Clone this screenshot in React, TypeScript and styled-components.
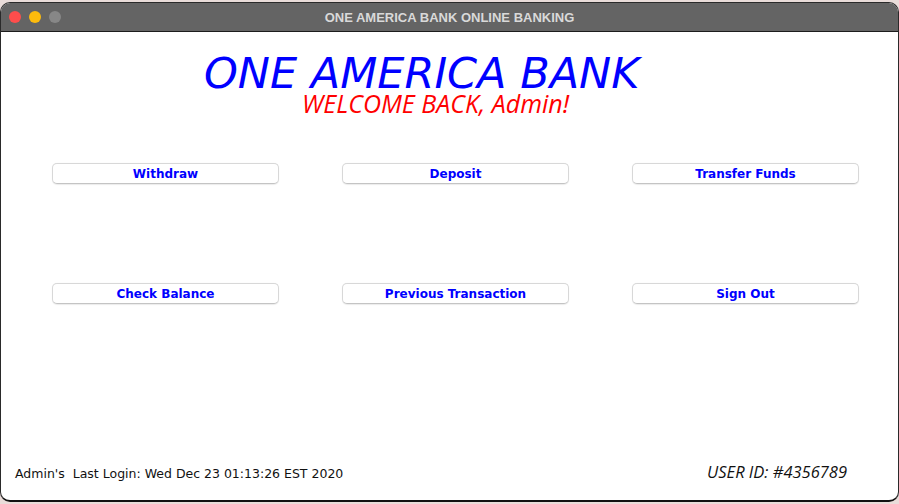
import React from "react";
import styled, { createGlobalStyle } from "styled-components";

const Global = createGlobalStyle`
  html, body { margin: 0; padding: 0; background: #e9dcd9; }
  body { width: 899px; height: 504px; overflow: hidden; }
`;

const Window = styled.div`
  margin-top: 2px;
  width: 899px;
  height: 500px;
  box-sizing: border-box;
  background: #ffffff;
  border: 1px solid #2a2a2a;
  border-bottom: 2px solid #111;
  border-radius: 10px;
  overflow: hidden;
  display: flex;
  flex-direction: column;
`;

const TitleBar = styled.div`
  height: 28px;
  flex: none;
  background: #646464;
  border-bottom: 1px solid #1c1c1c;
  display: flex;
  align-items: center;
  position: relative;
  padding-left: 8px;
`;

const Lights = styled.div`
  display: flex;
  gap: 8px;
`;

const Light = styled.span<{ $c: string }>`
  width: 12px;
  height: 12px;
  border-radius: 50%;
  background: ${(p) => p.$c};
`;

const Title = styled.div`
  position: absolute;
  left: 0;
  right: 0;
  text-align: center;
  font-family: "Liberation Sans", Arial, sans-serif;
  font-weight: bold;
  font-size: 13px;
  color: #d9d9d9;
  pointer-events: none;
`;

const Content = styled.div`
  flex: 1;
  display: flex;
  flex-direction: column;
  padding-top: 21px;
`;

const Heading = styled.div<{
  $left: number;
  $size: number;
  $lh: number;
  $color: string;
  $font: string;
}>`
  padding-left: ${(p) => p.$left}px;
  font-family: ${(p) => p.$font};
  font-style: italic;
  font-size: ${(p) => p.$size}px;
  line-height: ${(p) => p.$lh}px;
  height: ${(p) => p.$lh}px;
  color: ${(p) => p.$color};
  white-space: nowrap;
`;

const Grid = styled.div`
  margin-top: 50px;
  padding-left: 51px;
  display: grid;
  grid-template-columns: repeat(3, 227px);
  column-gap: 63px;
  row-gap: 99px;
`;

const Button = styled.button`
  height: 21px;
  box-sizing: border-box;
  background: #fff;
  border: 1px solid #d8d8d8;
  border-bottom-color: #c4c4c4;
  border-radius: 5px;
  box-shadow: 0 0.5px 1px rgba(0, 0, 0, 0.08);
  font-family: "DejaVu Sans", Verdana, sans-serif;
  font-weight: bold;
  font-size: 12px;
  color: #0000ff;
  padding: 0;
  cursor: pointer;
`;

const Footer = styled.div`
  margin-top: auto;
  margin-bottom: 17px;
  display: flex;
  justify-content: space-between;
  align-items: baseline;
  padding: 0 51px 0 14px;
`;

const LastLogin = styled.div`
  font-family: "DejaVu Sans", Verdana, sans-serif;
  font-size: 12.5px;
  color: #111;
  white-space: pre;
`;

const UserId = styled.div`
  font-family: "Open Sans", sans-serif;
  font-style: italic;
  font-size: 16.5px;
  color: #111;
`;

const buttons = [
  "Withdraw",
  "Deposit",
  "Transfer Funds",
  "Check Balance",
  "Previous Transaction",
  "Sign Out",
];

export default function App() {
  return (
    <>
      <Global />
      <Window>
        <TitleBar>
          <Lights>
            <Light $c="#fe4d4c" />
            <Light $c="#fdbb0c" />
            <Light $c="#878787" />
          </Lights>
          <Title>ONE AMERICA BANK ONLINE BANKING</Title>
        </TitleBar>
        <Content>
          <Heading
            $left={203}
            $size={43}
            $lh={40}
            $color="#0000ff"
            $font={`"DejaVu Sans", Verdana, sans-serif`}
          >
            ONE AMERICA BANK
          </Heading>
          <Heading
            $left={301}
            $size={25}
            $lh={20}
            $color="#ff0000"
            $font={`"Open Sans", sans-serif`}
          >
            WELCOME BACK, Admin!
          </Heading>
          <Grid>
            {buttons.map((b) => (
              <Button key={b}>{b}</Button>
            ))}
          </Grid>
          <Footer>
            <LastLogin>Admin's  Last Login: Wed Dec 23 01:13:26 EST 2020</LastLogin>
            <UserId>USER ID: #4356789</UserId>
          </Footer>
        </Content>
      </Window>
    </>
  );
}
